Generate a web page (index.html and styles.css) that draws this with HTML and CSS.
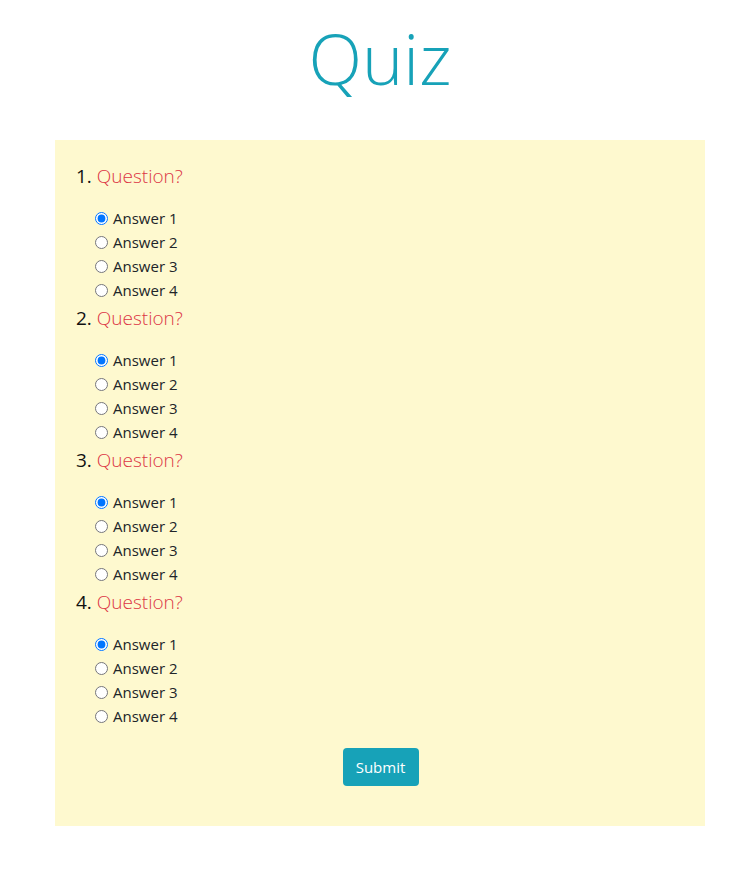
FILE: index.html
```html
<!DOCTYPE html>
<html lang="en">
<head>
<meta charset="utf-8">
<title>Quiz</title>
<link rel="stylesheet" href="styles.css">
</head>
<body>
<header class="page-head">
  <h1 class="title">Quiz</h1>
</header>
<main class="quiz">
  <form class="quiz-form">
    <ol class="questions">
      <li class="question">
        <div class="q-line"><span class="q-num">1.</span> <span class="q-text">Question?</span></div>
        <div class="answers">
          <label class="answer"><input type="radio" name="q1" checked>Answer 1</label>
          <label class="answer"><input type="radio" name="q1">Answer 2</label>
          <label class="answer"><input type="radio" name="q1">Answer 3</label>
          <label class="answer"><input type="radio" name="q1">Answer 4</label>
        </div>
      </li>
      <li class="question">
        <div class="q-line"><span class="q-num">2.</span> <span class="q-text">Question?</span></div>
        <div class="answers">
          <label class="answer"><input type="radio" name="q2" checked>Answer 1</label>
          <label class="answer"><input type="radio" name="q2">Answer 2</label>
          <label class="answer"><input type="radio" name="q2">Answer 3</label>
          <label class="answer"><input type="radio" name="q2">Answer 4</label>
        </div>
      </li>
      <li class="question">
        <div class="q-line"><span class="q-num">3.</span> <span class="q-text">Question?</span></div>
        <div class="answers">
          <label class="answer"><input type="radio" name="q3" checked>Answer 1</label>
          <label class="answer"><input type="radio" name="q3">Answer 2</label>
          <label class="answer"><input type="radio" name="q3">Answer 3</label>
          <label class="answer"><input type="radio" name="q3">Answer 4</label>
        </div>
      </li>
      <li class="question">
        <div class="q-line"><span class="q-num">4.</span> <span class="q-text">Question?</span></div>
        <div class="answers">
          <label class="answer"><input type="radio" name="q4" checked>Answer 1</label>
          <label class="answer"><input type="radio" name="q4">Answer 2</label>
          <label class="answer"><input type="radio" name="q4">Answer 3</label>
          <label class="answer"><input type="radio" name="q4">Answer 4</label>
        </div>
      </li>
    </ol>
    <div class="actions">
      <button type="button" class="btn-submit">Submit</button>
    </div>
  </form>
</main>
</body>
</html>
```
FILE: styles.css
```css
* { box-sizing: border-box; }

body {
  margin: 0;
  background: #fff;
  font-family: "Segoe UI", "Open Sans", "Noto Sans", sans-serif;
  color: #212529;
}

.page-head {
  height: 140px;
  display: flex;
  justify-content: center;
  padding-left: 7px;
}

.title {
  margin: 15px 0 0;
  font-size: 70px;
  font-weight: 300;
  line-height: 86px;
  color: #17a2b8;
}

.quiz {
  width: 650px;
  margin-left: 55px;
  background: #fef9cf;
  padding: 24px 20px 40px 21px;
}

.quiz-form { margin: 0; }

.questions {
  list-style: none;
  margin: 0;
  padding: 0;
}

.question { padding-bottom: 4px; }

.q-line {
  font-size: 19px;
  line-height: 24px;
  margin-bottom: 18px;
  color: #111;
}

.q-num { font-weight: 400; }

.q-text {
  color: #dc3545;
  font-weight: 300;
}

.answers {
  display: flex;
  flex-direction: column;
  padding-left: 19px;
}

.answer {
  display: flex;
  align-items: center;
  height: 24px;
  font-size: 15px;
  color: #212529;
}

.answer input {
  margin: 0 5px 0 0;
  width: 13px;
  height: 13px;
}

.actions {
  display: flex;
  justify-content: center;
  margin-top: 16px;
}

.btn-submit {
  font-family: inherit;
  font-size: 15px;
  line-height: 24px;
  padding: 7px 13px;
  height: 38px;
  width: 76px;
  border: none;
  border-radius: 4px;
  color: #fff;
  background: #17a2b8;
}
```
